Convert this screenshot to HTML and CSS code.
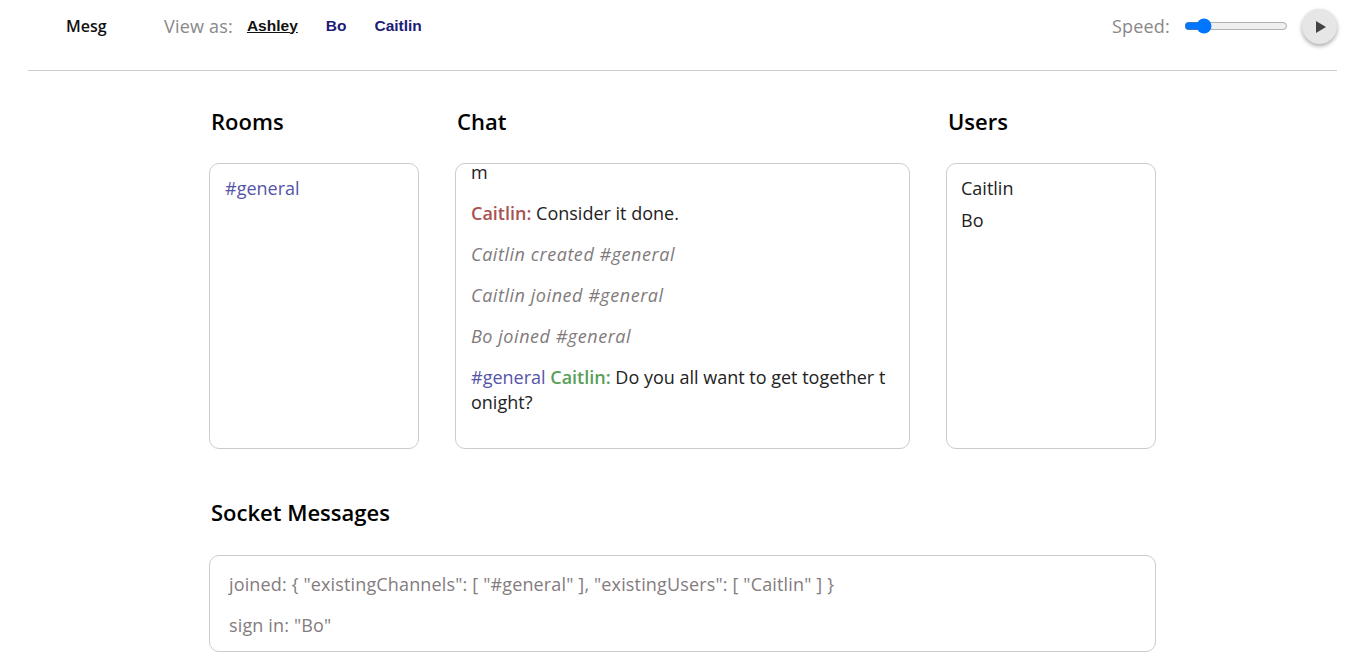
FILE: index.html
```html
<!DOCTYPE html>
<html lang="en">
<head>
<meta charset="utf-8">
<title>Mesg</title>
<link rel="stylesheet" href="styles.css">
</head>
<body>
<header class="topbar">
  <div class="brand">Mesg</div>
  <div class="viewas">
    <span class="viewas-label">View as:</span>
    <a class="user-link active" href="#">Ashley</a>
    <a class="user-link" href="#">Bo</a>
    <a class="user-link" href="#">Caitlin</a>
  </div>
  <div class="speed">
    <span class="speed-label">Speed:</span>
    <input class="speed-range" type="range" min="0" max="100" value="14">
    <button class="play" aria-label="Play">
      <svg width="12" height="14" viewBox="0 0 12 14"><path d="M1 1 L11 7 L1 13 Z" fill="#444"/></svg>
    </button>
  </div>
</header>
<hr class="divider">
<main class="layout">
  <section class="panel rooms">
    <h2 class="panel-title">Rooms</h2>
    <ul class="box list">
      <li class="channel">#general</li>
    </ul>
  </section>
  <section class="panel chat">
    <h2 class="panel-title">Chat</h2>
    <div class="box chat-box">
      <p class="msg"><span class="who red">Ashley:</span> Caitlin, could you please set up a general chat roo<br>m</p>
      <p class="msg"><span class="who red">Caitlin:</span> Consider it done.</p>
      <p class="msg sys">Caitlin created #general</p>
      <p class="msg sys">Caitlin joined #general</p>
      <p class="msg sys">Bo joined #general</p>
      <p class="msg"><span class="chan">#general</span> <span class="who green">Caitlin:</span> Do you all want to get together tonight?</p>
    </div>
  </section>
  <section class="panel users">
    <h2 class="panel-title">Users</h2>
    <ul class="box list">
      <li>Caitlin</li>
      <li>Bo</li>
    </ul>
  </section>
  <section class="socket">
    <h2 class="panel-title">Socket Messages</h2>
    <div class="box socket-box">
      <p>joined: { "existingChannels": [ "#general" ], "existingUsers": [ "Caitlin" ] }</p>
      <p>sign in: "Bo"</p>
    </div>
  </section>
</main>
</body>
</html>
```
FILE: styles.css
```css
* { box-sizing: border-box; }
body {
  margin: 0;
  font-family: "Open Sans", "Noto Sans", sans-serif;
  color: #222;
  background: #fff;
}
.topbar {
  height: 51px;
  margin: 0 28px;
  display: flex;
  align-items: center;
}
.brand {
  margin-left: 38px;
  width: 98px;
  font-size: 16px;
  font-weight: 600;
  color: #111;
}
.viewas { display: flex; align-items: center; }
.viewas-label {
  font-size: 18px;
  letter-spacing: 0.2px;
  color: #888;
  margin-right: 14px;
}
.user-link {
  font-family: "Liberation Sans", Arial, sans-serif;
  font-weight: bold;
  font-size: 15.5px;
  color: #1c1c78;
  text-decoration: none;
  margin-right: 28px;
}
.user-link.active { color: #111; text-decoration: underline; }
.speed { margin-left: auto; display: flex; align-items: center; }
.speed-label { font-size: 18px; letter-spacing: 0.2px; color: #888; margin-right: 14px; }
.speed-range { width: 104px; margin: 0 14px 0 0; accent-color: #0075ff; }
.play {
  width: 35px; height: 35px;
  border-radius: 50%;
  border: none;
  background: #e6e6e6;
  box-shadow: 0 2px 4px rgba(0,0,0,0.35);
  display: flex; align-items: center; justify-content: center;
  padding: 0 0 0 2px;
  margin-top: 2px;
}
.divider {
  margin: 19px 28px 0;
  border: none;
  border-top: 1px solid #d2cccf;
}
.layout {
  width: 947px;
  margin: 0 auto;
  display: grid;
  grid-template-columns: 210px 455px 210px;
  column-gap: 36px;
}
.panel-title {
  font-size: 22px;
  font-weight: 600;
  color: #000;
  margin: 35px 0 27px 2px;
  line-height: 30px;
}
.box {
  border: 1px solid #ccc;
  border-radius: 10px;
  height: 286px;
  margin: 0;
  font-size: 18px;
  line-height: 25px;
}
.list {
  list-style: none;
  padding: 8px 14px;
}
.list li { line-height: 32px; }
.rooms .list { padding-left: 15px; }
.channel, .chan { color: #5555a8; }
.chat-box {
  padding: 0 15px 33px;
  overflow: hidden;
  display: flex;
  flex-direction: column;
  justify-content: flex-end;
  gap: 16px;
}
.msg { margin: 0; word-break: break-all; flex-shrink: 0; }
.who { font-weight: 600; }
.red { color: #a85252; }
.green { color: #58a058; }
.sys { font-style: italic; color: #817a7c; letter-spacing: 0.55px; }
.socket { grid-column: 1 / 4; }
.socket .panel-title { margin-top: 48px; margin-bottom: 28px; }
.socket-box {
  height: 97px;
  padding: 16px 19px 13px;
  color: #847c7e;
  letter-spacing: 0.15px;
  display: flex;
  flex-direction: column;
  gap: 16px;
}
.socket-box p { margin: 0; }
```
